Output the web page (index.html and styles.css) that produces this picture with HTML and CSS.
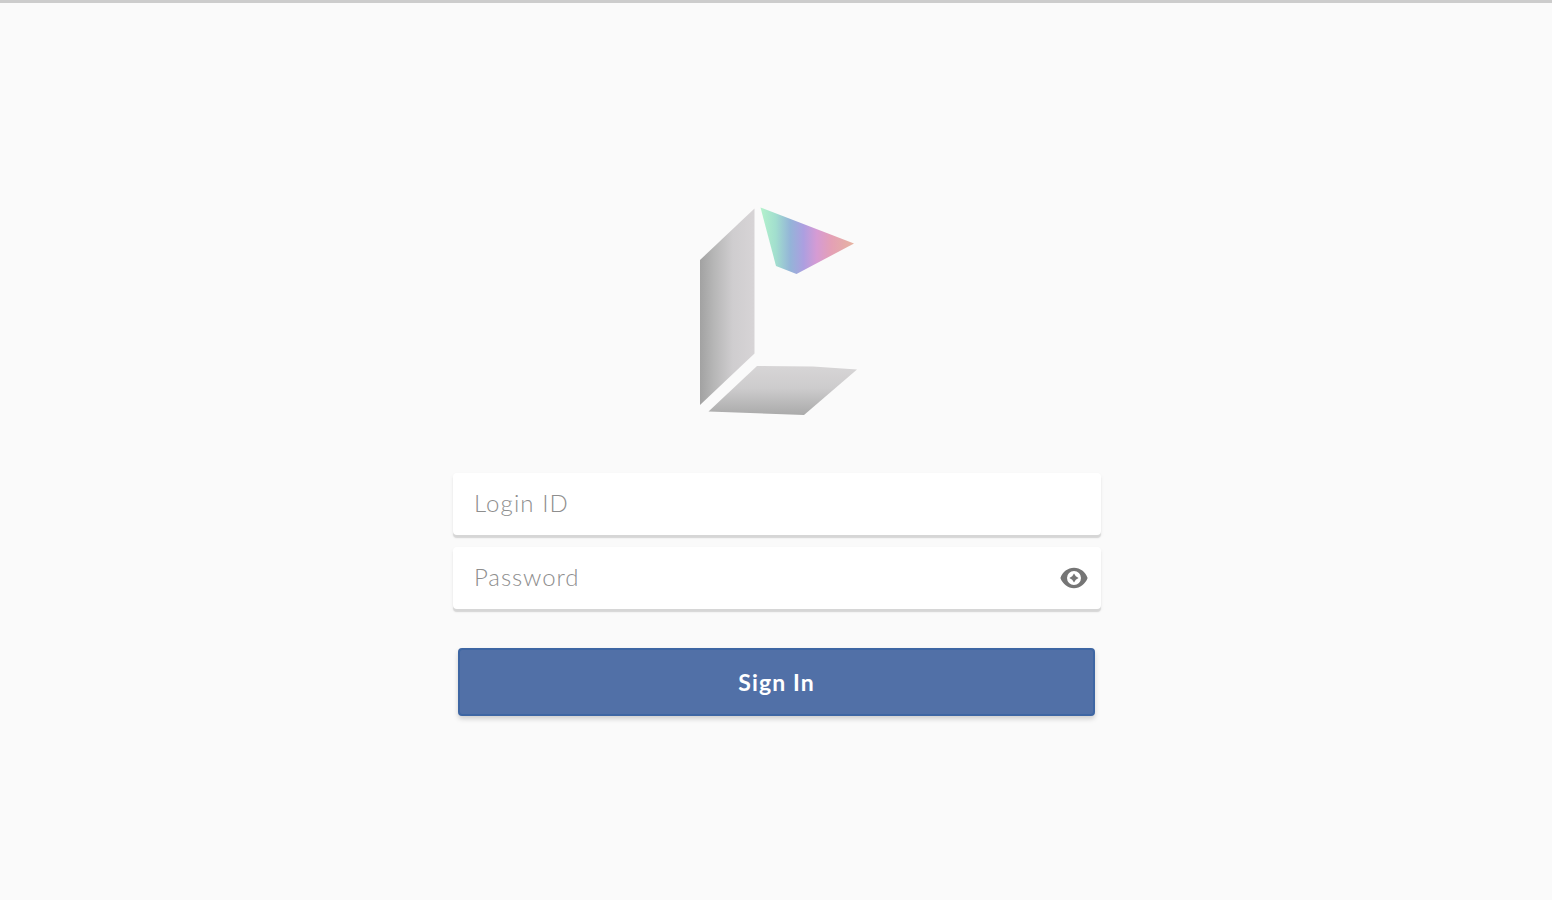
FILE: index.html
```html
<!DOCTYPE html>
<html lang="en">
<head>
    <meta charset="UTF-8">
    <meta name="viewport" content="width=device-width, initial-scale=1.0">
    <title>Sign In</title>
    <link rel="stylesheet" href="styles.css">
</head>
<body>

    <main class="login">
        <svg class="logo" viewBox="0 0 160 210" role="img" aria-label="Logo">
            <defs>
                <linearGradient id="side" x1="0" y1="0" x2="1" y2="0">
                    <stop offset="0" stop-color="#a2a2a2"/>
                    <stop offset="0.25" stop-color="#b6b6b6"/>
                    <stop offset="0.6" stop-color="#cfcdcf"/>
                    <stop offset="1" stop-color="#d7d4d6"/>
                </linearGradient>
                <linearGradient id="base" x1="0" y1="0" x2="0" y2="1">
                    <stop offset="0" stop-color="#d7d5d6"/>
                    <stop offset="0.45" stop-color="#cdcccd"/>
                    <stop offset="1" stop-color="#aaaaaa"/>
                </linearGradient>
                <linearGradient id="prism" x1="0" y1="0" x2="1" y2="0">
                    <stop offset="0" stop-color="#b4f2cc"/>
                    <stop offset="0.16" stop-color="#a2dfce"/>
                    <stop offset="0.32" stop-color="#94b4d8"/>
                    <stop offset="0.46" stop-color="#ac9fe0"/>
                    <stop offset="0.6" stop-color="#d59bd4"/>
                    <stop offset="0.76" stop-color="#e4a0b5"/>
                    <stop offset="1" stop-color="#e6b4a0"/>
                </linearGradient>
            </defs>
            <polygon fill="url(#side)" points="1,53 55.5,1.5 55.5,146.5 1,198"/>
            <polygon fill="url(#base)" points="58,159 114,159.5 158,162.5 105,208 9.5,204.5"/>
            <polygon fill="url(#prism)" points="61.5,0.5 155,36.5 97.5,67 77,59"/>
        </svg>

        <form class="login-form">
            <div class="field">
                <input type="text" class="login-id" name="loginId" placeholder="Login ID" aria-label="Login ID">
            </div>
            <div class="field">
                <input type="password" class="password" name="password" placeholder="Password" aria-label="Password">
                <svg class="eye" viewBox="0 0 28 22" aria-hidden="true">
                    <path fill="#757575" fill-rule="evenodd" d="M14 0.8C7.8 0.8 2.6 5 0.4 11C2.6 17 7.8 21.2 14 21.2S25.4 17 27.6 11C25.4 5 20.2 0.8 14 0.8ZM14 18A7 7 0 1 1 14 4A7 7 0 1 1 14 18Z"/>
                    <path fill="#757575" d="M14 6.4L15.8 9.2L18.6 11L15.8 12.8L14 15.6L12.2 12.8L9.4 11L12.2 9.2Z"/>
                </svg>
            </div>
            <button type="submit">Sign In</button>
        </form>
    </main>

</body>
</html>
```
FILE: styles.css
```css
* {
    box-sizing: border-box;
}
body {
    margin: 0;
    height: 100vh;
    border-top: 3px solid #cccccc;
    background-color: #fafafa;
    font-family: Lato, sans-serif;
    overflow: hidden;
}
.login {
    display: flex;
    flex-direction: column;
    align-items: center;
    width: 648px;
    margin: 0 auto;
    padding-top: 204px;
    transform: translateX(1px);
}
.logo {
    width: 160px;
    height: 210px;
    margin-left: 4px;
}
.login-form {
    display: flex;
    flex-direction: column;
    gap: 12px;
    width: 100%;
    margin-top: 56px;
}
.field {
    display: flex;
    align-items: center;
    height: 62px;
    padding: 0 13px 0 21px;
    border-radius: 4px;
    background-color: #ffffff;
    box-shadow: 0 3px 1px #d6d6d6, 0 2px 4px rgba(0, 0, 0, 0.06);
}
.field input {
    flex: 1;
    min-width: 0;
    padding: 0 0 4px;
    border: none;
    outline: none;
    background: none;
    font-family: inherit;
    font-size: 24px;
    font-weight: 300;
}
.field input::placeholder {
    color: #8e8e8e;
    opacity: 1;
}
.login-id {
    letter-spacing: 1.1px;
}
.password {
    letter-spacing: 0.9px;
}
.eye {
    width: 28px;
    height: 22px;
}
button {
    height: 68px;
    margin: 27px 6px 0 5px;
    padding: 0;
    border: 2px solid #3e66a3;
    border-radius: 4px;
    background-color: #5170a7;
    box-shadow: 0 3px 5px rgba(0, 0, 0, 0.17);
    color: #ffffff;
    font-family: inherit;
    font-size: 23px;
    font-weight: 700;
    letter-spacing: 1.1px;
    cursor: pointer;
}
```
